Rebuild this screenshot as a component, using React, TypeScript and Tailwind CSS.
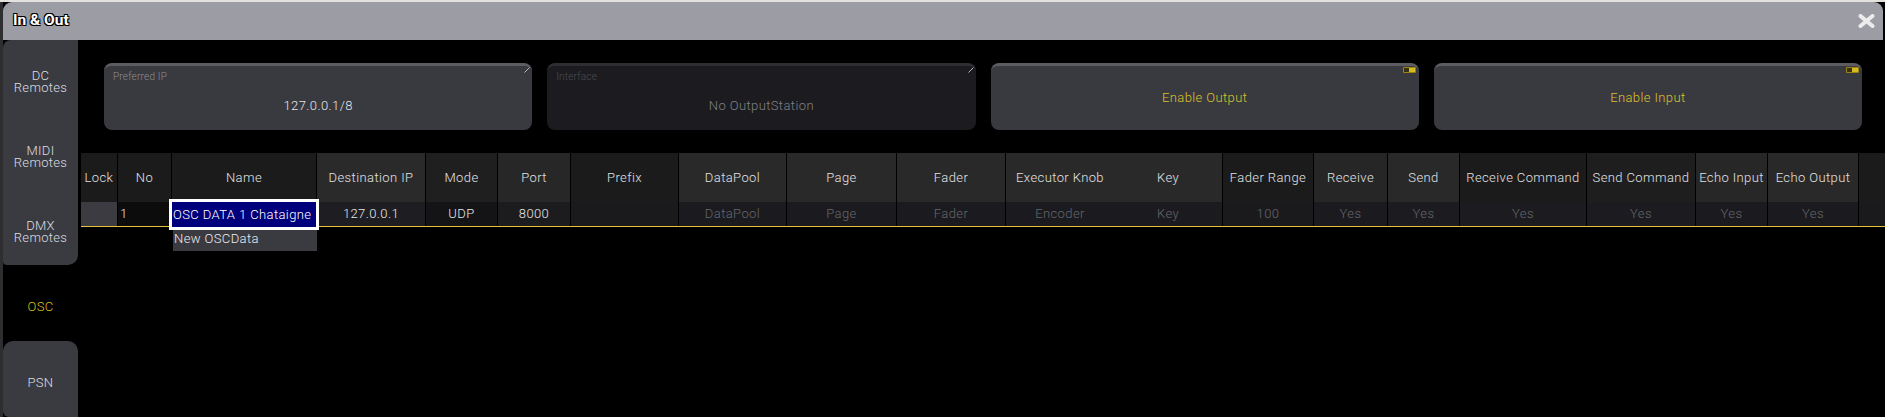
import React from 'react';

type Col = {
  label: string;
  w: string;
  head: string;
  row: string;
  value?: string;
  tone?: 'light' | 'dim';
  left?: boolean;
  noLine?: boolean;
};

const COLUMNS: Col[] = [
  { label: 'Lock', w: 'w-[37px]', head: 'bg-[#1b1b1b]', row: 'bg-[#3b3b41]' },
  { label: 'No', w: 'w-[54px]', head: 'bg-[#1b1b1b]', row: 'bg-[#0c0c0c]', value: '1', tone: 'light', left: true },
  { label: 'Name', w: 'w-[145px]', head: 'bg-[#1b1b1b]', row: 'bg-[#1b1b1f]' },
  { label: 'Destination IP', w: 'w-[109px]', head: 'bg-[#2a2a2a]', row: 'bg-[#1e1e22]', value: '127.0.0.1', tone: 'light' },
  { label: 'Mode', w: 'w-[72px]', head: 'bg-[#1f1f1f]', row: 'bg-[#141417]', value: 'UDP', tone: 'light' },
  { label: 'Port', w: 'w-[73px]', head: 'bg-[#272727]', row: 'bg-[#1c1c1f]', value: '8000', tone: 'light' },
  { label: 'Prefix', w: 'w-[108px]', head: 'bg-[#1b1b1b]', row: 'bg-[#1a1a1d]' },
  { label: 'DataPool', w: 'w-[108px]', head: 'bg-[#292929]', row: 'bg-[#1b1b1f]', value: 'DataPool', tone: 'dim' },
  { label: 'Page', w: 'w-[110px]', head: 'bg-[#292929]', row: 'bg-[#1b1b1f]', value: 'Page', tone: 'dim' },
  { label: 'Fader', w: 'w-[109px]', head: 'bg-[#292929]', row: 'bg-[#1b1b1f]', value: 'Fader', tone: 'dim' },
  { label: 'Executor Knob', w: 'w-[108px]', head: 'bg-[#292929]', row: 'bg-[#1b1b1f]', value: 'Encoder', tone: 'dim', noLine: true },
  { label: 'Key', w: 'w-[109px]', head: 'bg-[#292929]', row: 'bg-[#1b1b1f]', value: 'Key', tone: 'dim' },
  { label: 'Fader Range', w: 'w-[91px]', head: 'bg-[#1b1b1b]', row: 'bg-[#1a1a1d]', value: '100', tone: 'dim' },
  { label: 'Receive', w: 'w-[74px]', head: 'bg-[#262626]', row: 'bg-[#1b1b1f]', value: 'Yes', tone: 'dim' },
  { label: 'Send', w: 'w-[72px]', head: 'bg-[#292929]', row: 'bg-[#1c1c20]', value: 'Yes', tone: 'dim' },
  { label: 'Receive Command', w: 'w-[127px]', head: 'bg-[#1b1b1b]', row: 'bg-[#1c1c20]', value: 'Yes', tone: 'dim' },
  { label: 'Send Command', w: 'w-[109px]', head: 'bg-[#1e1e1e]', row: 'bg-[#1c1c20]', value: 'Yes', tone: 'dim' },
  { label: 'Echo Input', w: 'w-[72px]', head: 'bg-[#272727]', row: 'bg-[#1b1b1f]', value: 'Yes', tone: 'dim' },
  { label: 'Echo Output', w: 'w-[91px]', head: 'bg-[#292929]', row: 'bg-[#1b1b1f]', value: 'Yes', tone: 'dim' },
];

const EditMark = () => (
  <svg className="absolute right-[2px] top-[1px]" width="6" height="6" viewBox="0 0 6 6">
    <line x1="0.5" y1="5.5" x2="5.5" y2="0.5" stroke="#b8b8bc" strokeWidth="1" />
  </svg>
);

const Toggle = () => (
  <div className="absolute right-[3px] top-[1px] flex h-[6px] w-[13px] rounded-[1px] border border-[#9c8410] bg-[#d6bb1e]">
    <div className="h-full w-[5px] bg-[#3a3012]" />
  </div>
);

const SideTab = ({ lines, active }: { lines: string[]; active?: boolean }) => (
  <div
    className={`flex h-[75px] flex-col items-center justify-center pt-[9px] text-[13px] leading-[12.5px] tracking-[0.3px] ${
      active ? 'text-[#d9bf22]' : 'text-[#dedee0]'
    }`}
  >
    {lines.map((l) => (
      <span key={l}>{l}</span>
    ))}
  </div>
);

export default function App() {
  return (
    <div className="flex h-[417px] w-[1885px] flex-col overflow-hidden bg-black font-['Roboto',sans-serif] font-light">
      <div className="h-[2px] bg-[#e4e2de]" />
      <div className="flex min-h-0 flex-1">
        <div className="w-[3px] bg-[#2e2e30]" />
        <div className="flex min-w-0 flex-1 flex-col">
          {/* Title bar */}
          <div className="mr-[2px] flex h-[38px] items-center justify-between rounded-t-[9px] bg-[#9c9ca4] pl-[10px] pr-[8px]">
            <span className="text-[15.5px] font-bold text-white [text-shadow:-1px_-1px_0_#000,1px_-1px_0_#000,-1px_1px_0_#000,1px_1px_0_#000,0_1px_0_#000,0_-1px_0_#000]">
              In &amp; Out
            </span>
            <svg width="17" height="14" viewBox="0 0 17 14">
              <path d="M2.5 2 L14.5 12 M14.5 2 L2.5 12" stroke="#ececec" strokeWidth="4" strokeLinecap="round" />
            </svg>
          </div>

          <div className="flex min-h-0 flex-1">
            {/* Sidebar */}
            <div className="flex w-[75px] flex-col">
              <div className="rounded-tl-[8px] rounded-bl-[4px] rounded-br-[10px] bg-[#3a3a41]">
                <SideTab lines={['DC', 'Remotes']} />
                <SideTab lines={['MIDI', 'Remotes']} />
                <SideTab lines={['DMX', 'Remotes']} />
              </div>
              <div className="h-[76px]">
                <SideTab lines={['OSC']} active />
              </div>
              <div className="flex-1 rounded-t-[10px] rounded-bl-[6px] bg-[#3a3a41]">
                <SideTab lines={['PSN']} />
              </div>
            </div>

            {/* Main */}
            <div className="flex min-w-0 flex-1 flex-col tracking-[0.4px]">
              <div className="grid grid-cols-4 gap-[15px] pl-[26px] pr-[23px] pt-[23px]">
                <div className="relative h-[67px] rounded-[8px] border-t-[3px] border-[#5c5c62] bg-[#393940] px-[9px] pt-[5px]">
                  <EditMark />
                  <div className="text-[10px] leading-[12px] tracking-[0.2px] text-[#8e8e94]">Preferred IP</div>
                  <div className="mt-[15px] text-center text-[13px] leading-[16px] text-[#e6e6e8]">127.0.0.1/8</div>
                </div>
                <div className="relative h-[67px] rounded-[8px] border-t-[3px] border-[#2e2e32] bg-[#1c1c20] px-[9px] pt-[5px]">
                  <EditMark />
                  <div className="text-[10px] leading-[12px] tracking-[0.2px] text-[#4c4c52]">Interface</div>
                  <div className="mt-[15px] text-center text-[13px] leading-[16px] text-[#808086]">No OutputStation</div>
                </div>
                <div className="relative flex h-[67px] items-center justify-center rounded-[8px] border-t-[3px] border-[#5c5c62] bg-[#393940]">
                  <Toggle />
                  <span className="text-[13px] text-[#dcc22c]">Enable Output</span>
                </div>
                <div className="relative flex h-[67px] items-center justify-center rounded-[8px] border-t-[3px] border-[#5c5c62] bg-[#393940]">
                  <Toggle />
                  <span className="text-[13px] text-[#dcc22c]">Enable Input</span>
                </div>
              </div>

              {/* Table */}
              <div className="ml-[3px] mt-[23px] text-[13px]">
                <div className="flex h-[49px]">
                  {COLUMNS.map((c) => (
                    <div
                      key={c.label}
                      className={`${c.w} ${c.head} flex shrink-0 items-center justify-center whitespace-nowrap text-[#e2e2e4] ${
                        c.noLine ? '' : 'border-r border-black'
                      }`}
                    >
                      {c.label}
                    </div>
                  ))}
                  <div className="flex-1 bg-[#1b1b1b]" />
                </div>
                <div className="flex h-[24px]">
                  {COLUMNS.map((c) => (
                    <div
                      key={c.label}
                      className={`${c.w} ${c.row} relative flex shrink-0 items-center whitespace-nowrap ${
                        c.left ? 'justify-start pl-[2px]' : 'justify-center'
                      } ${c.tone === 'light' ? 'text-[#e6e6e8]' : 'text-[#66666c]'} ${c.noLine ? '' : 'border-r border-black'}`}
                    >
                      {c.value}
                      {c.label === 'Name' && (
                        <div className="absolute -left-[3px] -right-[3px] -top-[3px] -bottom-[4px] z-10 flex items-center border-[3px] border-white bg-[#00007c] pl-[1px] text-white">
                          OSC DATA 1 Chataigne
                        </div>
                      )}
                    </div>
                  ))}
                  <div className="flex-1 bg-[#1a1a1d]" />
                </div>
                <div className="h-px bg-[#e0c23c]" />
                <div className="flex h-[24px]">
                  <div className="w-[92px] shrink-0" />
                  <div className="flex w-[144px] items-center bg-[#3a3a41] pl-[1px] text-[#ececee]">New OSCData</div>
                </div>
              </div>
            </div>
          </div>
        </div>
      </div>
    </div>
  );
}
